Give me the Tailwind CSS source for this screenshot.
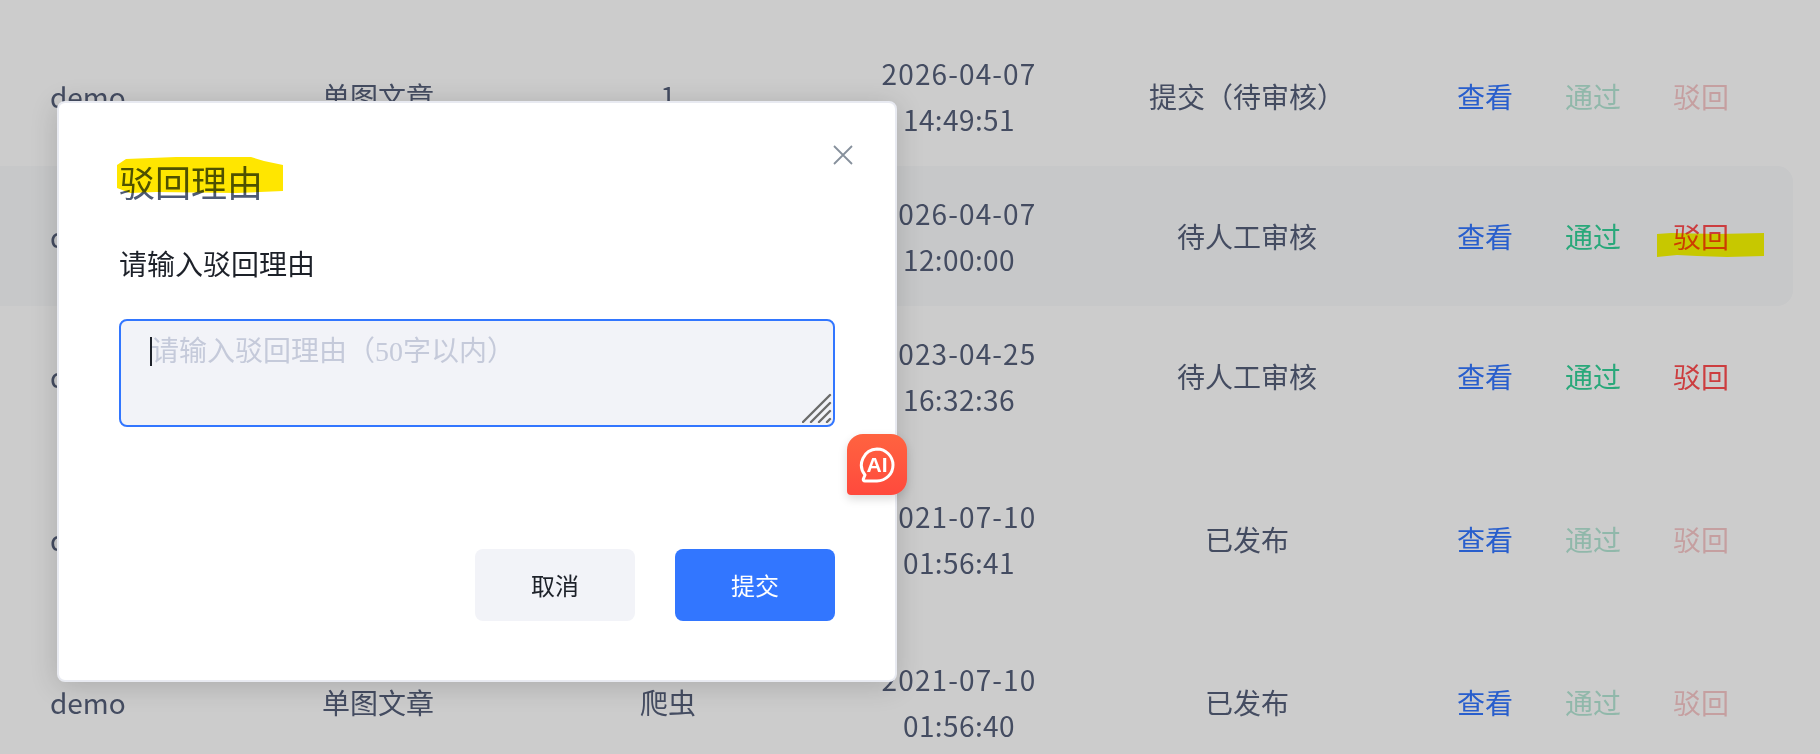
<!DOCTYPE html>
<html lang="zh-CN">
<head>
  <meta charset="UTF-8">
  <title>驳回理由</title>
  <script src="https://cdn.jsdelivr.net/npm/@tailwindcss/browser@4"></script>
</head>
<body class="bg-white font-['Noto_Sans_CJK_SC',sans-serif] text-[28px] leading-[46px] text-[#56607a]">
  <div class="relative w-[1820px] h-[754px] overflow-hidden">

    <!-- table -->
    <div class="pt-[26px] w-[1793px]">
      <div class="grid grid-cols-[280px_196px_384px_198px_378px_1fr] items-center h-[140px] text-center">
        <div class="pl-[50px] text-left">demo</div>
        <div>单图文章</div>
        <div>1</div>
        <div><div class="tracking-[1.1px]">2026-04-07</div><div class="tracking-[0.4px]">14:49:51</div></div>
        <div>提交（待审核）</div>
        <div class="pl-[21px] flex gap-[52px]">
          <span class="text-[#3276ff]">查看</span><span class="text-[#2eb88a] opacity-35">通过</span><span class="text-[#e5484d] opacity-30">驳回</span>
        </div>
      </div>
      <div class="grid grid-cols-[280px_196px_384px_198px_378px_1fr] items-center h-[140px] text-center bg-[#f9fafc] rounded-r-2xl">
        <div class="pl-[50px] text-left">demo</div>
        <div>单图文章</div>
        <div>爬虫</div>
        <div><div class="tracking-[1.1px]">2026-04-07</div><div class="tracking-[0.4px]">12:00:00</div></div>
        <div>待人工审核</div>
        <div class="pl-[21px] flex gap-[52px]">
          <span class="text-[#3276ff]">查看</span><span class="text-[#34d399]">通过</span><span class="text-[#ff4d4f]">驳回</span>
        </div>
      </div>
      <div class="grid grid-cols-[280px_196px_384px_198px_378px_1fr] items-center h-[140px] text-center">
        <div class="pl-[50px] text-left">demo</div>
        <div>单图文章</div>
        <div>爬虫</div>
        <div><div class="tracking-[1.1px]">2023-04-25</div><div class="tracking-[0.4px]">16:32:36</div></div>
        <div>待人工审核</div>
        <div class="pl-[21px] flex gap-[52px]">
          <span class="text-[#3276ff]">查看</span><span class="text-[#34d399]">通过</span><span class="text-[#ff4d4f]">驳回</span>
        </div>
      </div>
      <div class="grid grid-cols-[280px_196px_384px_198px_378px_1fr] items-center h-[186px] text-center">
        <div class="pl-[50px] text-left">demo</div>
        <div>单图文章</div>
        <div>爬虫</div>
        <div><div class="tracking-[1.1px]">2021-07-10</div><div class="tracking-[0.4px]">01:56:41</div></div>
        <div>已发布</div>
        <div class="pl-[21px] flex gap-[52px]">
          <span class="text-[#3276ff]">查看</span><span class="text-[#2eb88a] opacity-35">通过</span><span class="text-[#e5484d] opacity-30">驳回</span>
        </div>
      </div>
      <div class="grid grid-cols-[280px_196px_384px_198px_378px_1fr] items-center h-[140px] text-center">
        <div class="pl-[50px] text-left">demo</div>
        <div>单图文章</div>
        <div>爬虫</div>
        <div><div class="tracking-[1.1px]">2021-07-10</div><div class="tracking-[0.4px]">01:56:40</div></div>
        <div>已发布</div>
        <div class="pl-[21px] flex gap-[52px]">
          <span class="text-[#3276ff]">查看</span><span class="text-[#2eb88a] opacity-35">通过</span><span class="text-[#e5484d] opacity-30">驳回</span>
        </div>
      </div>
    </div>

    <!-- mask -->
    <div class="absolute inset-0 bg-black/20"></div>

    <!-- dialog -->
    <div class="absolute left-[57px] top-[101px] w-[840px] h-[581px] bg-white border-2 border-[#e8eaf1] rounded-lg shadow-[0_4px_28px_rgba(0,0,0,0.16)] pl-[60px] pr-[60px] pt-[53px]">
      <svg class="absolute right-[42px] top-[42px] w-5 h-5 text-[#86909c]" viewBox="0 0 20 20" fill="none" stroke="currentColor" stroke-width="1.8">
        <path d="M1 1l18 18M19 1L1 19"/>
      </svg>
      <h3 class="text-[36px] leading-[50px] font-normal text-[#4e5a75]">驳回理由</h3>
      <div class="mt-[34px] text-[#1d2129]">请输入驳回理由</div>
      <div class="relative mt-[33px] h-[108px]">
        <textarea class="block w-full h-full resize-none rounded-lg border-2 border-[#3276ff] bg-[#f2f3f8] pl-[30px] pt-[8px] font-['Liberation_Serif','Noto_Sans_CJK_SC',serif] text-[28px] leading-[46px] outline-none placeholder:text-[#c5cada]" placeholder="请输入驳回理由（50字以内）"></textarea>
        <div class="absolute left-[31px] top-[18px] w-[2px] h-[29px] bg-[#1d2129]"></div>
        <svg class="absolute right-[3px] bottom-[4px] w-[30px] h-[30px] text-[#6b6b6b]" viewBox="0 0 30 30" fill="none" stroke="currentColor" stroke-width="2.4" stroke-linecap="round">
          <path d="M1 29L28 2M9 29L28 10M17 29L28 18M25 29L28 26"/>
        </svg>
      </div>
      <div class="mt-[122px] flex justify-end gap-[40px] text-[24px]">
        <button class="w-[160px] h-[72px] rounded-lg bg-[#f2f3f8] text-[#1d2129]">取消</button>
        <button class="w-[160px] h-[72px] rounded-lg bg-[#3276ff] text-white">提交</button>
      </div>
    </div>

    <!-- floating AI button -->
    <div class="absolute left-[847px] top-[434px] w-[60px] h-[61px] flex items-center justify-center rounded-2xl rounded-bl-[4px] bg-gradient-to-b from-[#ff6340] to-[#ff493d] shadow-[0_4px_10px_rgba(0,0,0,0.15)]">
      <div class="relative w-[36px] h-[36px] flex items-center justify-center">
        <svg class="absolute inset-0 w-[36px] h-[36px] text-white" viewBox="0 0 36 36" fill="none" stroke="currentColor" stroke-width="3" stroke-linejoin="round">
          <path d="M18 2a16 16 0 0 1 0 32H6c-1.500 0-2-1-1.600-2.200L6 28A16 16 0 0 1 18 2Z"/>
        </svg>
        <span class="relative font-['Liberation_Sans',sans-serif] text-[21px] leading-none font-bold text-white">AI</span>
      </div>
    </div>

    <!-- marker strokes -->
    <svg class="absolute left-[116px] top-[156px] w-[168px] h-[38px] mix-blend-multiply" viewBox="0 0 168 38">
      <path fill="#ffe600" d="M1 9L10 3L60 1L135 1L148 5L167 9L167 35L120 37L40 36L14 37L1 32Z"/>
    </svg>
    <svg class="absolute left-[1657px] top-[232px] w-[107px] h-[26px] mix-blend-multiply" viewBox="0 0 107 26">
      <path fill="#ffff00" d="M0 2L14 1L60 2L107 1L107 24L70 25L40 24L20 23L0 25Z"/>
    </svg>
  </div>
</body>
</html>
